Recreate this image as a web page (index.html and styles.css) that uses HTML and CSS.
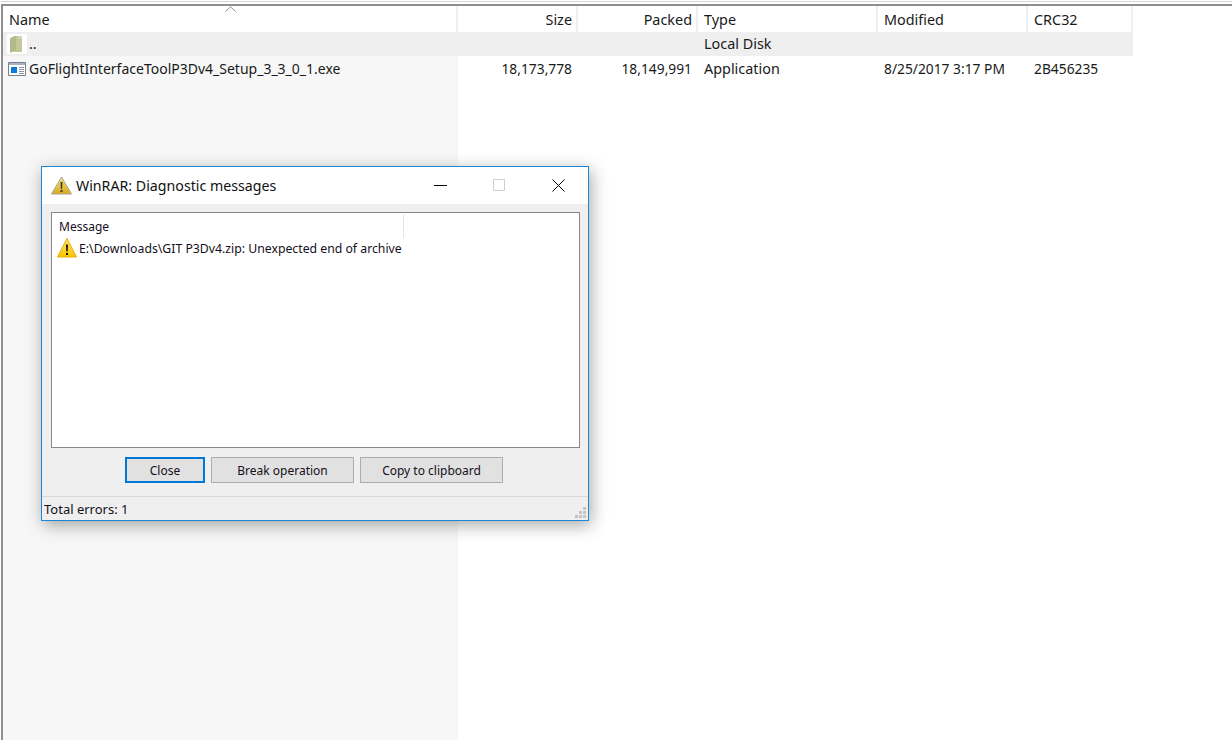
FILE: index.html
```html
<!DOCTYPE html>
<html lang="en">
<head>
    <meta charset="UTF-8">
    <meta name="viewport" content="width=device-width, initial-scale=1.0">
    <title>WinRAR: Diagnostic messages</title>
    <link rel="stylesheet" href="styles.css">
</head>
<body>
    <div class="top-rule"></div>
    <div class="file-pane">
        <svg class="sort-arrow" width="11" height="6" viewBox="0 0 11 6"><path d="M.5 5.5 5.5.8l5 4.7" fill="none" stroke="#8c8c8c"/></svg>
        <div class="file-row file-head">
            <div class="cell col-name head-cell">Name</div>
            <div class="cell col-size head-cell">Size</div>
            <div class="cell col-packed head-cell">Packed</div>
            <div class="cell col-type head-cell">Type</div>
            <div class="cell col-modified head-cell">Modified</div>
            <div class="cell col-crc head-cell">CRC32</div>
        </div>
        <div class="file-body">
            <div class="file-row row-selected">
                <div class="cell col-name">
                    <span class="file-icon folder-box">
                        <svg width="20" height="20" viewBox="0 0 20 20"><path d="M6 2h9v16H6z" fill="#c3c79a"/><path d="M3 4 9 2v14l-6 3z" fill="#b3b98c"/><path d="M11 2h4v3h-4z" fill="#d2d5b0"/></svg>
                    </span>
                    <span class="dots">..</span>
                </div>
                <div class="cell col-size"></div>
                <div class="cell col-packed"></div>
                <div class="cell col-type">Local Disk</div>
                <div class="cell col-modified"></div>
                <div class="cell col-crc"></div>
            </div>
            <div class="file-row row-file">
                <div class="cell col-name">
                    <span class="file-icon">
                        <svg width="18" height="16" viewBox="0 0 18 16"><path d="M.5 1.500h17v13H.5z" fill="#fff" stroke="#76808c"/><path d="M1 2h16v2H1z" fill="#aab4c0"/><path d="M3 6h6v6H3z" fill="#0a78dc"/><path d="M11 6h5v1h-5zM11 8h5v1h-5zM11 10h5v1h-5zM11 12h5v1h-5z" fill="#8a96a4"/></svg>
                    </span>
                    <span class="file-name">GoFlightInterfaceToolP3Dv4_Setup_3_3_0_1.exe</span>
                </div>
                <div class="cell col-size number">18,173,778</div>
                <div class="cell col-packed number">18,149,991</div>
                <div class="cell col-type">Application</div>
                <div class="cell col-modified number">8/25/2017 3:17 PM</div>
                <div class="cell col-crc number">2B456235</div>
            </div>
        </div>
    </div>

    <div class="dialog">
        <div class="title-bar">
            <svg class="title-icon" width="21" height="19" viewBox="0 0 21 19">
                <defs><linearGradient id="warnDim" x1="0" y1="0" x2="0" y2="1"><stop offset="0" stop-color="#f4e27a"/><stop offset="1" stop-color="#d8a91c"/></linearGradient></defs>
                <path d="M10.500 1 20.500 18H.5z" fill="url(#warnDim)" stroke="#a8a690"/>
                <path d="M9.500 6h2l-.4 7h-1.200zM9.500 14h2v2h-2z" fill="#3c3a28"/>
            </svg>
            <span class="title-text">WinRAR: Diagnostic messages</span>
            <div class="win-buttons">
                <span class="win-btn"><svg width="13" height="13" viewBox="0 0 13 13"><path d="M0 6.500h13" stroke="#000"/></svg></span>
                <span class="win-btn"><svg width="13" height="13" viewBox="0 0 13 13"><path d="M.5.5h11v11H.5z" fill="none" stroke="#cfcfcf"/></svg></span>
                <span class="win-btn"><svg width="13" height="13" viewBox="0 0 13 13"><path d="M.5.5l12 12M12.500.5l-12 12" stroke="#000" fill="none"/></svg></span>
            </div>
        </div>
        <div class="dialog-body">
            <div class="message-list">
                <div class="message-head"><span class="message-col">Message</span></div>
                <div class="message-row">
                    <svg width="20" height="20" viewBox="0 0 20 20">
                        <defs><linearGradient id="warnBright" x1="0" y1="0" x2="0" y2="1"><stop offset="0" stop-color="#ffe866"/><stop offset="1" stop-color="#fcc400"/></linearGradient></defs>
                        <path d="M10 .5 19.500 19H.5z" fill="url(#warnBright)" stroke="#e3ae0a"/>
                        <path d="M9 6.500h2l-.3 7H9.300zM9 15h2v2H9z" fill="#111"/>
                    </svg>
                    <span class="message-text">E:\Downloads\GIT P3Dv4.zip: Unexpected end of archive</span>
                </div>
            </div>
            <div class="button-row">
                <button class="btn btn-default">Close</button>
                <button class="btn">Break operation</button>
                <button class="btn">Copy to clipboard</button>
            </div>
        </div>
        <div class="status-bar">
            <span>Total errors: 1</span>
            <svg class="grip" width="12" height="12" viewBox="0 0 12 12"><path d="M8 0h3v3H8zM4 4h3v3H4zM8 4h3v3H8zM0 8h3v3H0zM4 8h3v3H4zM8 8h3v3H8z" fill="#c4c4c4"/></svg>
        </div>
    </div>
</body>
</html>
```

FILE: styles.css
```css
* {
    box-sizing: border-box;
}
html, body {
    height: 100%;
}
body {
    margin: 0;
    height: 740px;
    overflow: hidden;
    background-color: #ffffff;
    color: #1a1a1a;
    font-family: "Noto Sans", Arial, sans-serif;
    position: relative;
    display: flex;
    flex-direction: column;
}
.top-rule {
    height: 5px;
    flex-shrink: 0;
    margin: 1px 0 0 1px;
    border-top: 1px solid #d4d4d4;
    border-bottom: 2px solid #8f8f8f;
}
.file-pane {
    flex: 1;
    position: relative;
    margin-left: 1px;
    border-left: 2px solid #8f8f8f;
    display: flex;
    flex-direction: column;
    font-size: 14.4px;
}
.sort-arrow {
    position: absolute;
    left: 222px;
    top: 0;
}
.file-body {
    flex: 1;
    background: linear-gradient(#f7f7f7, #f7f7f7) no-repeat 0 0 / 455px 100%;
}
.file-row {
    display: flex;
    height: 24px;
    width: 1130px;
    line-height: 24px;
}
.file-head {
    height: 26px;
    line-height: 27px;
}
.row-selected {
    background-color: #efefef;
}
.row-file .cell {
    padding-top: 1px;
}
.cell {
    padding: 0 5px 0 6px;
    white-space: nowrap;
    display: flex;
    align-items: center;
}
.head-cell {
    padding-right: 4px;
    border-right: 2px solid #efefef;
}
.row-file .number {
    padding-right: 6px;
    font-size: 13.8px;
}
.col-name { width: 455px; }
.col-size { width: 120px; justify-content: flex-end; }
.col-packed { width: 120px; justify-content: flex-end; }
.col-type { width: 180px; }
.col-modified { width: 150px; }
.col-crc { width: 105px; }
.col-name .file-icon {
    width: 20px;
    margin: 0 2px 0 -2px;
    display: flex;
    flex-shrink: 0;
    align-items: center;
    justify-content: center;
}
.folder-box {
    background-color: #ffffff;
    height: 20px;
}
.file-name {
    font-size: 14px;
}
.dialog {
    position: absolute;
    left: 41px;
    top: 166px;
    width: 548px;
    height: 355px;
    background-color: #efefef;
    border: 1px solid #1c85d6;
    box-shadow: 2px 4px 16px rgba(0, 0, 0, 0.35);
    display: flex;
    flex-direction: column;
    font-size: 12px;
    color: #14101c;
}
.title-bar {
    height: 37px;
    flex-shrink: 0;
    background-color: #ffffff;
    display: flex;
    align-items: center;
    padding-left: 9px;
    padding-bottom: 1px;
}
.title-icon {
    margin-right: 4px;
}
.title-text {
    font-size: 14.2px;
    color: #111111;
}
.win-buttons {
    margin-left: auto;
    display: flex;
}
.win-btn {
    width: 59px;
    display: flex;
    justify-content: center;
}
.dialog-body {
    flex: 1;
    padding: 8px 8px 0 9px;
    display: flex;
    flex-direction: column;
}
.message-list {
    height: 236px;
    flex-shrink: 0;
    background-color: #ffffff;
    border: 1px solid #88888c;
}
.message-head {
    height: 25px;
    padding-top: 1px;
    line-height: 25px;
}
.message-col {
    display: block;
    width: 352px;
    height: 24px;
    padding-left: 7px;
    border-right: 1px solid #e4e4e4;
}
.message-row {
    display: flex;
    align-items: center;
    height: 20px;
    padding-left: 5px;
    gap: 2px;
    white-space: nowrap;
}
.message-text {
    font-size: 12.25px;
}
.button-row {
    display: flex;
    justify-content: center;
    gap: 6px;
    margin-top: 9px;
    padding-right: 3px;
}
.btn {
    height: 26px;
    width: 143px;
    padding: 0;
    background-color: #e1e1e1;
    border: 1px solid #adadad;
    font: inherit;
    color: inherit;
}
.btn-default {
    width: 80px;
    border: 2px solid #0078d7;
}
.status-bar {
    height: 24px;
    flex-shrink: 0;
    border-top: 1px solid #d9d9d9;
    padding-left: 2px;
    line-height: 25px;
    font-size: 13px;
    position: relative;
}
.grip {
    position: absolute;
    right: 1px;
    bottom: 1px;
}
```
